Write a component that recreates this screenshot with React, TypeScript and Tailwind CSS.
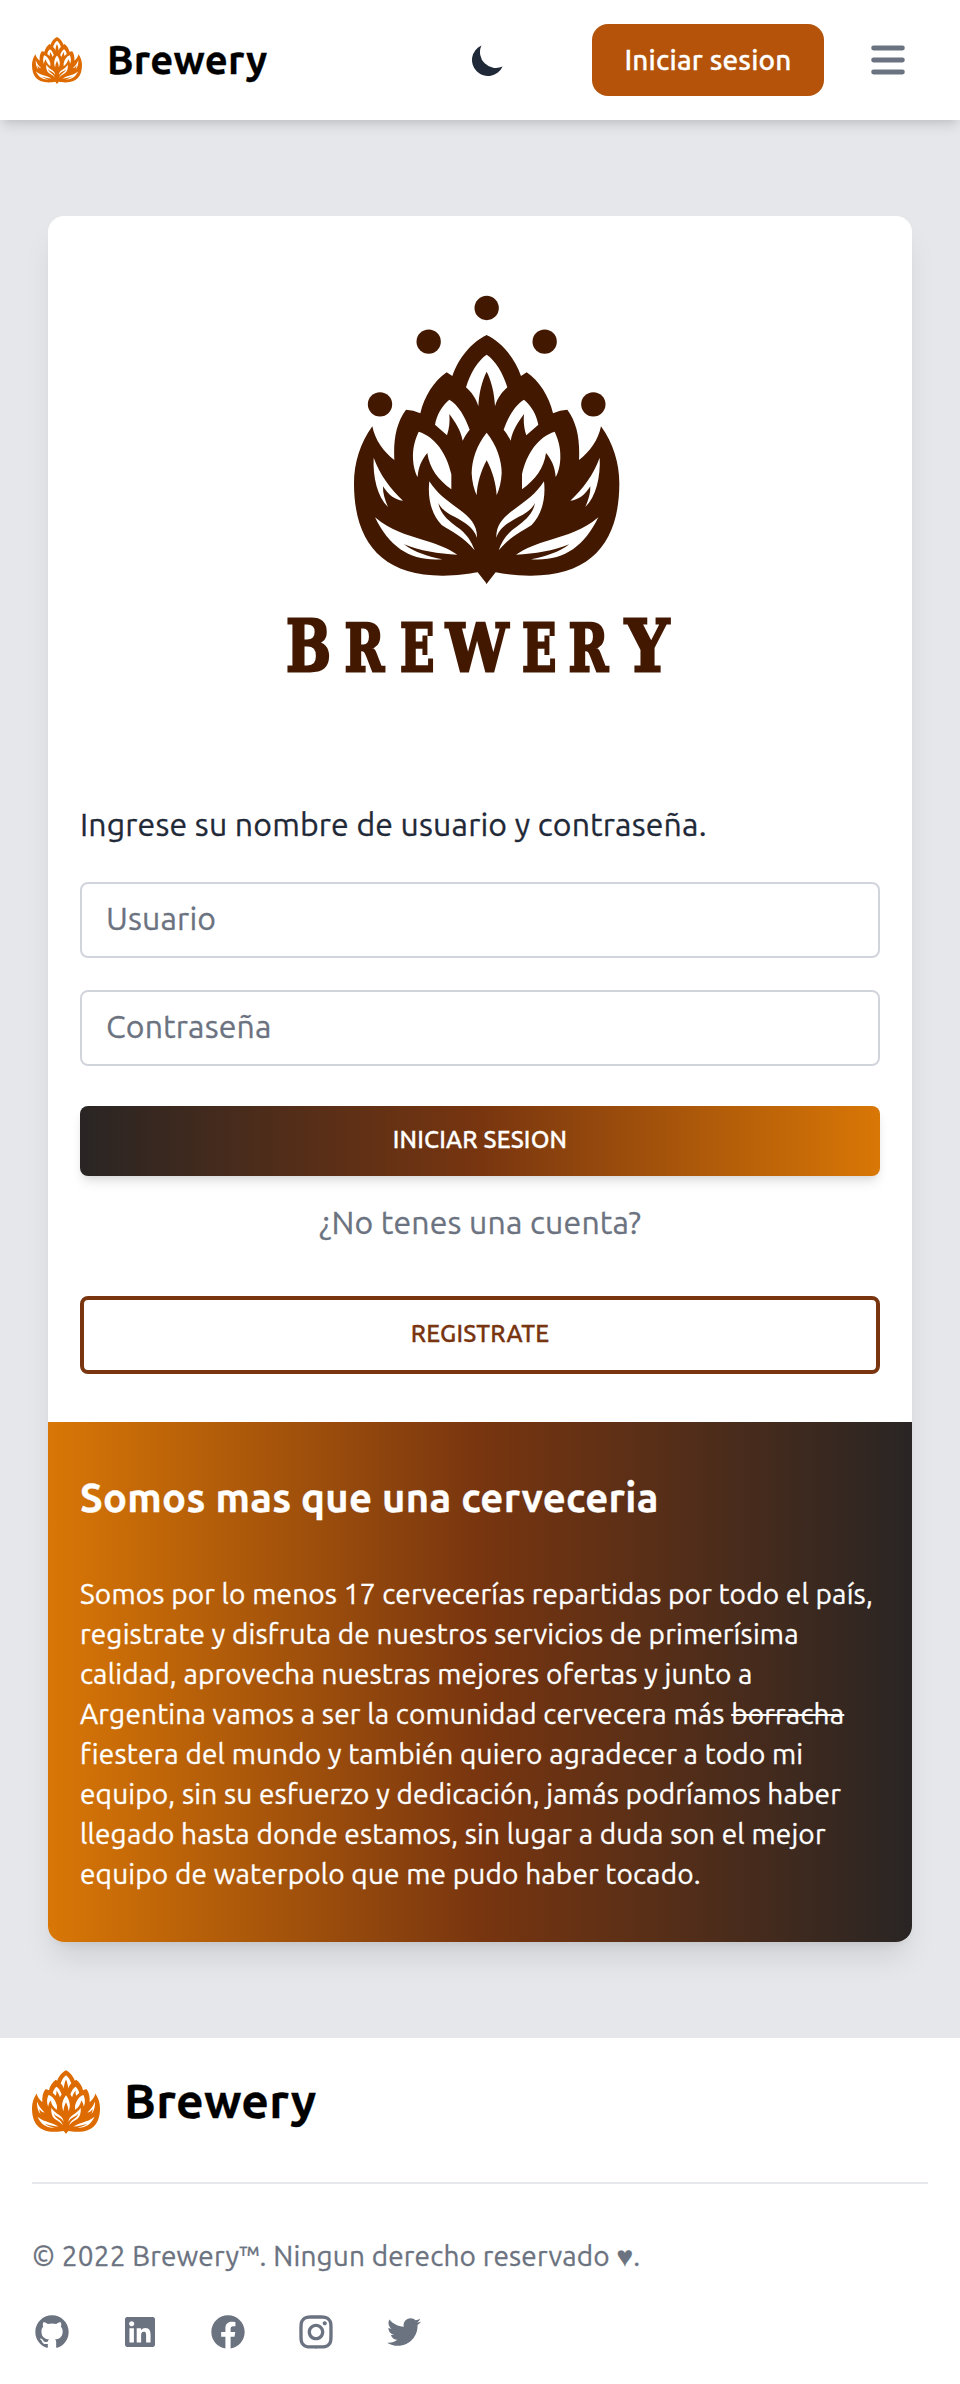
import { RiGithubFill, RiLinkedinBoxFill, RiFacebookCircleFill, RiInstagramLine, RiTwitterFill } from "react-icons/ri";

const socials = [RiGithubFill, RiLinkedinBoxFill, RiFacebookCircleFill, RiInstagramLine, RiTwitterFill];

const halfLeaves = [
  "M328 359C305 378 290 405 285 434L321 466C328 445 330 425 328 402C345 425 362 450 368 482C375 468 382 458 389 449C375 410 355 375 328 359Z",
  "M236 455C222 485 218 510 219 535C220 560 226 580 233 591C235 560 245 540 262 519C268 565 295 600 334 628L334 583C320 520 285 470 236 455Z",
  "M101 533C120 585 150 625 189 662C165 660 145 645 129 619C128 640 135 660 144 681C112 650 98 590 101 533Z",
  "M268 604C290 640 325 665 360 690C390 712 412 735 411 773C400 740 370 725 345 711C320 700 305 687 295 669C300 700 325 722 350 740C380 760 395 785 404 811C370 770 335 755 305 735C275 705 262 655 268 604Z",
  "M105 712C150 750 200 765 250 780C290 792 325 805 352 824C295 822 240 812 192 793C225 818 265 830 307 838C215 845 150 805 105 712Z",
];

// Letter, x position, horizontal stretch and size of the wordmark.
const wordmark: [string, number, number, number][] = [
  ["B", 286, 0.75, 71],
  ["R", 344.5, 0.74, 64.5],
  ["E", 400, 0.7, 64.5],
  ["W", 446, 0.86, 64.5],
  ["E", 522, 0.7, 64.5],
  ["R", 568.5, 0.74, 64.5],
  ["Y", 625, 0.87, 71],
];

function HalfHop() {
  return (
    <>
      <path
        fill="currentColor"
        d="M441 165C395 185 355 235 337 288L320 277C283 302 252 350 241 400Q220 390 198 389C168 430 160 480 163 540C130 515 105 480 97 439C60 490 42 550 42 610C42 780 120 888 310 887C350 887 385 882 413 877L440 911H441Z"
      />
      {halfLeaves.map((d) => (
        <path key={d} d={d} fill="#fff" />
      ))}
    </>
  );
}

function Hop() {
  return (
    <>
      <HalfHop />
      <g transform="translate(880 0) scale(-1 1)">
        <HalfHop />
      </g>
      <path
        fill="#fff"
        d="M440 224C415 240 390 280 378 322C395 337 408 355 415 379C417 340 425 305 440 275C455 305 463 340 465 379C472 355 485 337 502 322C490 280 465 240 440 224Z"
      />
      <path
        fill="#fff"
        d="M440 458C410 495 395 540 395 580C396 605 402 628 410 646C412 610 422 575 440 541C458 575 468 610 470 646C478 628 484 605 485 580C485 540 470 495 440 458Z"
      />
    </>
  );
}

function HopIcon({ className }: { className: string }) {
  return (
    <svg viewBox="42 165 796 746" className={className} aria-hidden="true">
      <Hop />
    </svg>
  );
}

function Logo() {
  return (
    <svg viewBox="270 280 420 410" className="h-[410px] w-[420px] text-[#431800]">
      <g transform="translate(340 280) scale(.33333)">
        <Hop />
        <g fill="currentColor">
          <circle cx="440" cy="84" r="36.5" />
          <circle cx="266" cy="185" r="36.5" />
          <circle cx="614" cy="185" r="36.5" />
          <circle cx="120" cy="373" r="36.5" />
          <circle cx="760" cy="373" r="36.5" />
        </g>
      </g>
      <g fill="currentColor" stroke="currentColor" strokeWidth="2.8" fontFamily="DejaVu Serif, serif" fontWeight="700">
        {wordmark.map(([letter, x, stretch, size]) => (
          <text key={x} transform={`translate(${x} 671) scale(${stretch} 1)`} fontSize={size}>
            {letter}
          </text>
        ))}
      </g>
    </svg>
  );
}

export default function App() {
  return (
    <div className="flex h-[2384px] w-[960px] flex-col bg-[#e5e7eb] font-['Ubuntu','Noto_Sans',sans-serif] tracking-[0.165px] text-[#1f2937] [-webkit-text-stroke:0.3px_currentColor]">
      <header className="z-10 flex h-[120px] shrink-0 items-center bg-white px-8 shadow-[0_8px_12px_-2px_rgba(0,0,0,0.1),0_4px_8px_-4px_rgba(0,0,0,0.1)]">
        <HopIcon className="h-[47px] w-[50px] text-[#dd6b00]" />
        <span className="ml-[25px] text-[40px] leading-[56px] font-bold tracking-[0.28px] text-black">Brewery</span>
        <div className="ml-auto flex items-center">
          <svg viewBox="0 0 20 20" fill="currentColor" className="mr-[84px] size-10">
            <path d="M17.293 13.293A8 8 0 016.707 2.707a8.001 8.001 0 1010.586 10.586z" />
          </svg>
          <button className="h-[72px] w-[232px] rounded-2xl bg-[#b45309] text-[28px] leading-10 font-medium whitespace-nowrap text-white">
            Iniciar sesion
          </button>
          <svg viewBox="0 0 20 20" fill="currentColor" className="mr-4 ml-10 size-12 text-[#6b7280]">
            <path d="M3 5a1 1 0 011-1h12a1 1 0 110 2H4a1 1 0 01-1-1zM3 10a1 1 0 011-1h12a1 1 0 110 2H4a1 1 0 01-1-1zM3 15a1 1 0 011-1h12a1 1 0 110 2H4a1 1 0 01-1-1z" />
          </svg>
        </div>
      </header>

      <main className="h-[1918px] shrink-0 px-12 py-24">
        <div className="flex h-[1726px] flex-col overflow-hidden rounded-2xl bg-white shadow-[0_20px_30px_-6px_rgba(0,0,0,0.1),0_8px_12px_-8px_rgba(0,0,0,0.1)]">
          <section className="flex h-[1206px] flex-col px-8 pt-16">
            <div className="flex h-[520px] justify-center">
              <Logo />
            </div>
            <p className="text-[32px] leading-[48px] whitespace-nowrap">Ingrese su nombre de usuario y contraseña.</p>
            <input
              placeholder="Usuario"
              className="mt-[34px] h-[76px] w-full rounded-lg border-2 border-[#d1d5db] px-6 pt-2.5 pb-3.5 text-[32px] leading-[48px] placeholder:text-[#6b7280]"
            />
            <input
              placeholder="Contraseña"
              className="mt-8 h-[76px] w-full rounded-lg border-2 border-[#d1d5db] px-6 pt-2.5 pb-3.5 text-[32px] leading-[48px] placeholder:text-[#6b7280]"
            />
            <button className="mt-10 h-[70px] rounded-lg bg-[linear-gradient(to_right,#292524,#78350f,#d97706)] pb-0.5 text-[24px] font-medium text-white shadow-[0_8px_12px_-2px_rgba(0,0,0,0.1),0_4px_8px_-4px_rgba(0,0,0,0.1)]">
              INICIAR SESION
            </button>
            <p className="mt-[22px] text-center text-[32px] leading-[48px] text-[#6b7280]">¿No tenes una cuenta?</p>
            <button className="mt-[50px] h-[78px] rounded-lg border-4 border-[#78350f] pb-0.5 text-[24px] font-medium text-[#78350f]">
              REGISTRATE
            </button>
          </section>
          <section className="grow bg-[linear-gradient(to_right,#d97706,#78350f,#292524)] px-8 pt-12 text-white">
            <h2 className="text-[40px] leading-[56px] font-bold tracking-[0.28px] whitespace-nowrap">
              Somos mas que una cerveceria
            </h2>
            <p className="mt-12 text-[28px] leading-10 whitespace-nowrap">
              Somos por lo menos 17 cervecerías repartidas por todo el país,
              <br />
              registrate y disfruta de nuestros servicios de primerísima
              <br />
              calidad, aprovecha nuestras mejores ofertas y junto a
              <br />
              Argentina vamos a ser la comunidad cervecera más <s>borracha</s>
              <br />
              fiestera del mundo y también quiero agradecer a todo mi
              <br />
              equipo, sin su esfuerzo y dedicación, jamás podríamos haber
              <br />
              llegado hasta donde estamos, sin lugar a duda son el mejor
              <br />
              equipo de waterpolo que me pudo haber tocado.
            </p>
          </section>
        </div>
      </main>

      <footer className="grow bg-white px-8 pt-8">
        <div className="flex h-16 items-center">
          <HopIcon className="h-16 w-[68px] text-[#dd6b00]" />
          <span className="ml-6 pb-1 text-[48px] leading-[60px] font-bold tracking-[0.35px] text-black">Brewery</span>
        </div>
        <hr className="mt-12 border-t-2 border-[#e5e7eb]" />
        <p className="mt-[52px] text-[28px] leading-10 whitespace-nowrap text-[#6b7280]">
          © 2022 Brewery™. Ningun derecho reservado ♥.
        </p>
        <div className="mt-9 flex gap-12 text-[#6b7280]">
          {socials.map((Icon, i) => (
            <Icon key={i} size={40} />
          ))}
        </div>
      </footer>
    </div>
  );
}
